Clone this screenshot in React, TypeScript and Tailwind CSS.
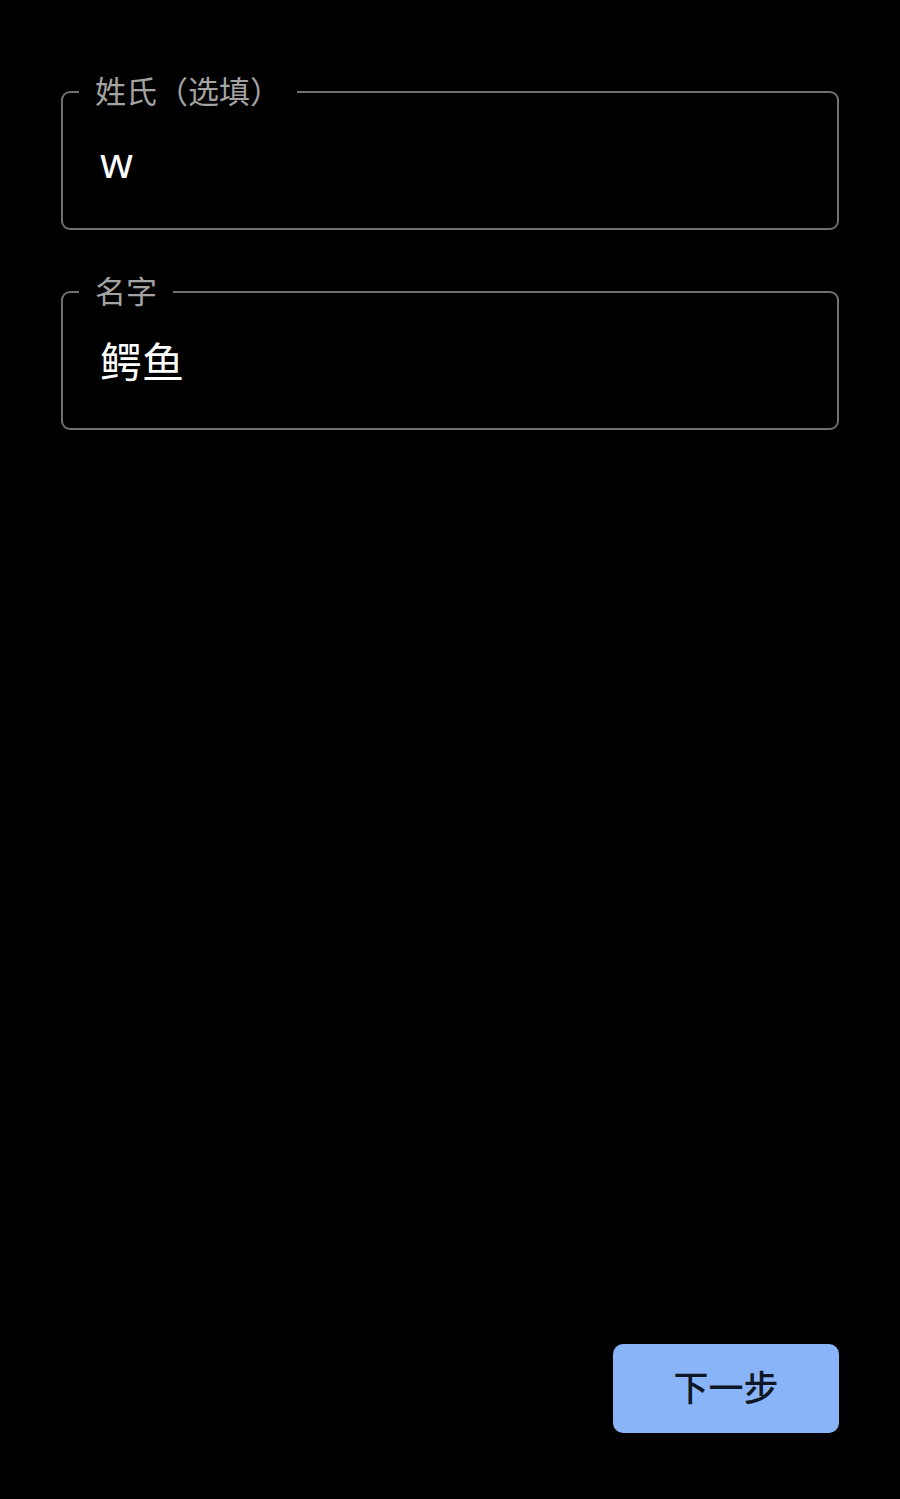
import React from 'react';

interface FieldProps {
  label: string;
  value: string;
}

function OutlinedField({ label, value }: FieldProps) {
  return (
    <fieldset className="border-2 border-[#6f6f6f] rounded-[9px] px-0 pb-0 m-0 min-w-0">
      <legend className="ml-[16px] px-4 text-[31px] leading-none text-[#a3a3a3]">{label}</legend>
      <div className="h-[121px] pb-[12px] flex items-center pl-[37px] text-[42px] text-white">
        {value}
      </div>
    </fieldset>
  );
}

export default function App() {
  return (
    <div
      className="min-h-screen bg-black flex flex-col px-[61px] pt-[76px] pb-[66px]"
      style={{ fontFamily: '"Noto Sans", "Noto Sans CJK SC", sans-serif' }}
    >
      <div className="flex flex-col gap-[46px]">
        <OutlinedField label="姓氏（选填）" value="w" />
        <OutlinedField label="名字" value="鳄鱼" />
      </div>

      <div className="mt-auto flex justify-end">
        <button className="w-[226px] h-[89px] rounded-[10px] bg-[#8ab4f8] text-[#0d1726] text-[35px] font-medium">
          下一步
        </button>
      </div>
    </div>
  );
}
